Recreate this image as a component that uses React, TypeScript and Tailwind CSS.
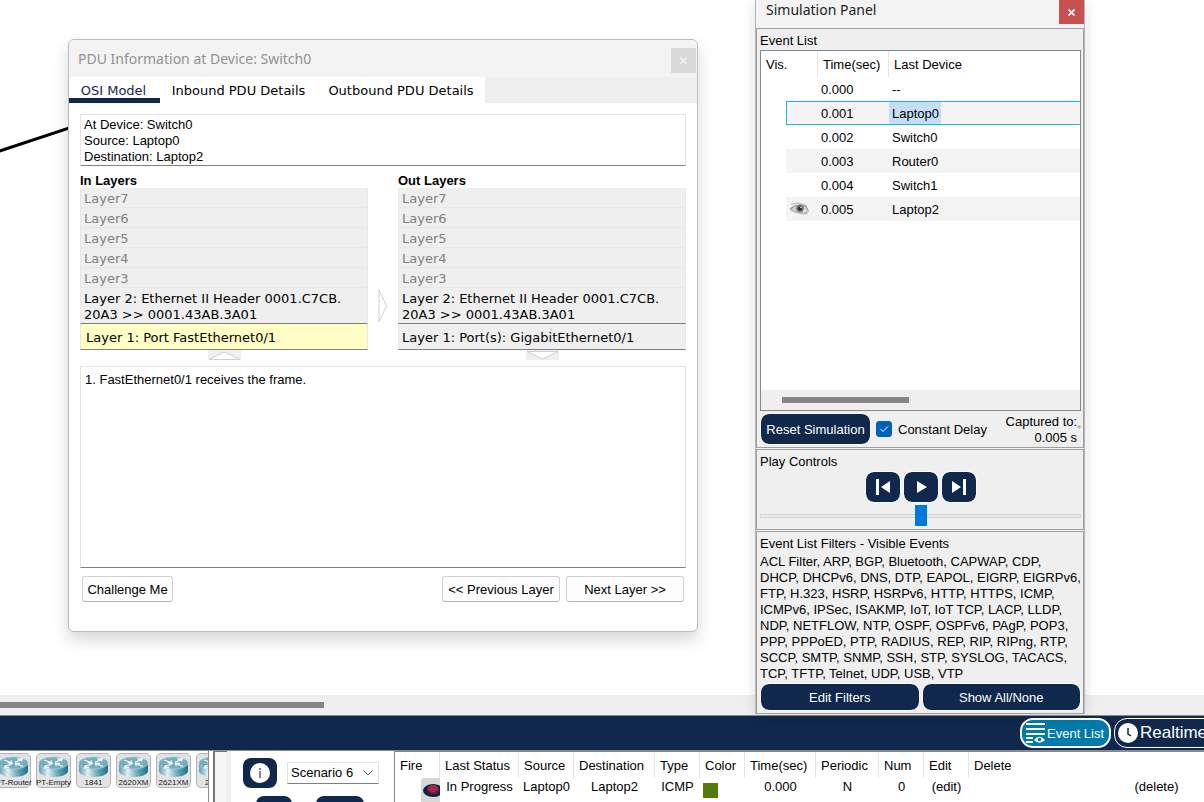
import React from 'react';

type LayerColumn = {
  title: string;
  layer1: string;
  active?: boolean;
};

const upperLayers = ['Layer7', 'Layer6', 'Layer5', 'Layer4', 'Layer3'];

const columns: LayerColumn[] = [
  { title: 'In Layers', layer1: 'Layer 1: Port FastEthernet0/1', active: true },
  { title: 'Out Layers', layer1: 'Layer 1: Port(s): GigabitEthernet0/1' },
];

const events = [
  { time: '0.000', device: '--' },
  { time: '0.001', device: 'Laptop0', selected: true },
  { time: '0.002', device: 'Switch0' },
  { time: '0.003', device: 'Router0' },
  { time: '0.004', device: 'Switch1' },
  { time: '0.005', device: 'Laptop2', visible: true },
];

const filterLines = [
  'ACL Filter, ARP, BGP, Bluetooth, CAPWAP, CDP,',
  'DHCP, DHCPv6, DNS, DTP, EAPOL, EIGRP, EIGRPv6,',
  'FTP, H.323, HSRP, HSRPv6, HTTP, HTTPS, ICMP,',
  'ICMPv6, IPSec, ISAKMP, IoT, IoT TCP, LACP, LLDP,',
  'NDP, NETFLOW, NTP, OSPF, OSPFv6, PAgP, POP3,',
  'PPP, PPPoED, PTP, RADIUS, REP, RIP, RIPng, RTP,',
  'SCCP, SMTP, SNMP, SSH, STP, SYSLOG, TACACS,',
  'TCP, TFTP, Telnet, UDP, USB, VTP',
];

const devices = ['PT-Router', 'PT-Empty', '1841', '2620XM', '2621XM', '2811'];

function LayerList({ column }: { column: LayerColumn }) {
  return (
    <section className="min-w-0 flex-1">
      <h2 className="h-[15px] text-[13px] leading-[15px] font-bold">{column.title}</h2>
      <div className="flex flex-col font-['DejaVu_Sans',sans-serif] text-[13px]">
        {upperLayers.map((name) => (
          <button
            key={name}
            type="button"
            disabled
            className="h-5 border border-t-0 border-[#e8e8e8] bg-[#efefef] px-[3px] pt-[2px] text-left leading-[17px] text-[#808080]"
          >
            {name}
          </button>
        ))}
        <button
          type="button"
          className="h-9 border-x border-b border-x-[#e8e8e8] border-b-[#808080] bg-[#efefef] px-[3px] pt-[3px] text-left leading-4"
        >
          Layer 2: Ethernet II Header 0001.C7CB.
          <br />
          20A3 &gt;&gt; 0001.43AB.3A01
        </button>
        <button
          type="button"
          className={
            column.active
              ? 'h-[26px] border-x border-b border-x-[#e8e8e8] border-b-[#808080] bg-[#ffffc5] px-[5px] pt-[2px] text-left'
              : 'h-[26px] border-x border-b border-x-[#e8e8e8] border-b-[#808080] bg-[#efefef] px-[3px] pt-[2px] text-left'
          }
        >
          {column.layer1}
        </button>
      </div>
      <svg className="mx-auto block h-[10px] w-[33px]" viewBox="0 0 33 10">
        <rect width="33" height="10" fill="#efefef" />
        <path
          d={column.active ? 'M1 9.500L16.500 2L32 9.500Z' : 'M1 1.500L16.500 9L32 1.500Z'}
          fill="#fff"
          stroke="#cfcfcf"
        />
      </svg>
    </section>
  );
}

function PduWindow() {
  return (
    <div
      role="dialog"
      aria-label="PDU Information"
      className="absolute top-[39px] left-[68px] flex h-[593px] w-[630px] flex-col overflow-hidden rounded-md border border-[#bdbdbd] bg-white shadow-[0_8px_16px_rgba(0,0,0,0.16)]"
    >
      <header className="flex h-[37px] shrink-0 items-center justify-between bg-[#f3f3f3] pr-px pl-[9px]">
        <h1 className="font-['Noto_Sans',sans-serif] text-sm text-[#929292]">PDU Information at Device: Switch0</h1>
        <button
          type="button"
          aria-label="Close"
          className="mt-1 flex size-[25px] items-center justify-center bg-[#dadada] text-[#f4f4f4]"
        >
          <svg className="size-[7px]" viewBox="0 0 7 7">
            <path d="M.5 .5L6.500 6.500M6.500 .5L.5 6.500" stroke="currentColor" strokeWidth="1.500" />
          </svg>
        </button>
      </header>
      <nav className="flex h-[26px] shrink-0 bg-[#efefef] font-['DejaVu_Sans',sans-serif] text-[13px]">
        <button type="button" className="w-[91px] border-b-5 border-[#0f284b] bg-white pt-1 pr-[2px] text-[#0f284b]">
          OSI Model
        </button>
        <button type="button" className="w-[157px] border-b-5 border-white bg-white pt-1">
          Inbound PDU Details
        </button>
        <button type="button" className="w-[168px] border-b-5 border-white bg-white pt-1">
          Outbound PDU Details
        </button>
      </nav>
      <div className="flex flex-1 flex-col px-[11px] pt-[11px]">
        <textarea
          readOnly
          aria-label="PDU summary"
          className="h-[52px] shrink-0 resize-none overflow-hidden border border-[#e3e3e3] border-b-[#808080] px-[3px] pt-[2px] leading-4 outline-none"
          value={'At Device: Switch0\nSource: Laptop0\nDestination: Laptop2'}
        />
        <div className="mt-[7px] flex">
          <LayerList column={columns[0]} />
          <div className="flex w-[30px] shrink-0 justify-center pt-[116px]">
            <svg className="h-[34px] w-[10px]" viewBox="0 0 10 34">
              <path d="M1 1L8.500 17L1 33Z" fill="#fff" stroke="#cfcfcf" />
            </svg>
          </div>
          <LayerList column={columns[1]} />
        </div>
        <textarea
          readOnly
          aria-label="Layer description"
          className="mt-[6px] h-[202px] shrink-0 resize-none border border-[#e3e3e3] border-b-[#808080] px-1 pt-[5px] leading-4 outline-none"
          value="1. FastEthernet0/1 receives the frame."
        />
        <div className="mt-2 flex h-[26px] gap-[6px] px-[2px]">
          <button type="button" className="mr-auto w-[91px] rounded-[3px] border border-[#d0d0d0] border-b-[#b5b5b5] bg-[#fdfdfd] pt-[2px]">
            Challenge Me
          </button>
          <button type="button" className="w-[118px] rounded-[3px] border border-[#d0d0d0] border-b-[#b5b5b5] bg-[#fdfdfd] pt-[2px]">
            &lt;&lt; Previous Layer
          </button>
          <button type="button" className="w-[118px] rounded-[3px] border border-[#d0d0d0] border-b-[#b5b5b5] bg-[#fdfdfd] pt-[2px]">
            Next Layer &gt;&gt;
          </button>
        </div>
      </div>
    </div>
  );
}

function EyeIcon() {
  return (
    <svg className="ml-[3px] h-[14px] w-5" viewBox="0 0 20 14">
      <path d="M2 2.500Q9-.5 18 4" stroke="#c4c4c4" strokeWidth="1.500" fill="none" />
      <path d="M0 7.500Q5 2 11 2.500T20 9Q19 12 17 13Q12 12.500 8 11Q4 10 0 7.500Z" fill="#cdcdcd" />
      <path d="M1 7Q6 2.500 12 3T19 8.500" stroke="#8a8a8a" fill="none" />
      <path d="M2 8Q8 12 18 11" stroke="#aaa" fill="none" />
      <path d="M13 6L18 9L14 10Z" fill="#f2f2f2" />
      <circle cx="11" cy="6.500" r="3.800" fill="#777" />
      <circle cx="11" cy="6.500" r="2" fill="#222" />
      <circle cx="12" cy="5.500" r=".8" fill="#eee" />
    </svg>
  );
}

function EventRow({ event, shaded }: { event: (typeof events)[number]; shaded: boolean }) {
  const tone = shaded ? 'bg-[#f4f4f4]' : '';
  const edge = event.selected ? 'border-y border-[#1cb3dc]' : '';
  return (
    <tr className="h-6">
      <td />
      <td className={`${tone} ${edge} ${event.selected ? 'border-l' : ''} p-0`}>{event.visible && <EyeIcon />}</td>
      <td className={`${tone} ${edge} p-0 pt-[2px] pl-[3px]`}>{event.time}</td>
      <td className={`${tone} ${edge} p-0`}>
        <span className={event.selected ? 'block w-[52px] bg-[#c3def5] px-[3px] pt-[2px] leading-5' : 'block px-[3px] pt-[2px] leading-5'}>
          {event.device}
        </span>
      </td>
    </tr>
  );
}

function PlayButton({ label, path }: { label: string; path: string }) {
  return (
    <button type="button" aria-label={label} className="flex h-[30px] w-[34px] items-center justify-center rounded-lg bg-[#0f284b] outline outline-white/70">
      <svg className="size-5" viewBox="0 0 20 20" fill="#fff">
        <path d={path} />
      </svg>
    </button>
  );
}

function SimulationPanel() {
  return (
    <aside className="absolute top-0 left-[755px] z-10 w-[330px] border-x border-[#b4b4b4] bg-[#f3f3f3] shadow-[0_0_14px_rgba(0,0,0,0.12)]">
      <header className="flex h-7 items-start justify-between pl-[10px]">
        <h1 className="font-['Noto_Sans',sans-serif] text-sm leading-5 text-[#222]">Simulation Panel</h1>
        <button type="button" aria-label="Close panel" className="flex h-6 w-[25px] items-center justify-center bg-[#c75050] text-white">
          <svg className="size-[7px]" viewBox="0 0 7 7">
            <path d="M.5 .5L6.500 6.500M6.500 .5L.5 6.500" stroke="currentColor" strokeWidth="1.700" />
          </svg>
        </button>
      </header>
      <section className="h-[420px] border border-[#a0a0a0] bg-[#efefef] pr-[2px] pl-[3px]">
        <h2 className="h-[21px] leading-[23px]">Event List</h2>
        <div className="flex h-[361px] flex-col border border-[#828790] bg-white">
          <table className="w-full table-fixed border-separate border-spacing-0 text-left">
            <colgroup>
              <col className="w-[25px]" />
              <col className="w-[32px]" />
              <col className="w-[71px]" />
              <col />
            </colgroup>
            <thead>
              <tr className="h-[26px]">
                <th colSpan={2} className="border-r border-[#e5e5e5] p-0 pt-[2px] pl-[5px] font-normal">Vis.</th>
                <th className="border-r border-[#e5e5e5] p-0 pt-[2px] pl-[5px] font-normal">Time(sec)</th>
                <th className="p-0 pt-[2px] pl-[5px] font-normal">Last Device</th>
              </tr>
            </thead>
            <tbody>
              {events.map((event, i) => (
                <EventRow key={event.time} event={event} shaded={i % 2 === 1} />
              ))}
            </tbody>
          </table>
          <div className="mt-auto flex h-5 items-center bg-[#efefef] pl-[21px]">
            <div className="h-[6px] w-[127px] bg-[#868686]" />
          </div>
        </div>
        <div className="flex h-9 items-center pl-px">
          <button type="button" className="h-[30px] w-[109px] rounded-lg bg-[#0f284b] pt-[2px] text-white outline outline-white/70">
            Reset Simulation
          </button>
          <label className="ml-[6px] flex items-center gap-[6px]">
            <span className="relative flex size-4">
              <input type="checkbox" defaultChecked className="peer size-4 appearance-none rounded-[3px] border border-[#0060b8] checked:bg-[#0060b8]" />
              <svg className="pointer-events-none absolute inset-0 hidden size-4 peer-checked:block" viewBox="0 0 16 16">
                <path d="M4.500 8L7 10.500L12 5.500" fill="none" stroke="#fff" />
              </svg>
            </span>
            <span className="pt-[2px]">Constant Delay</span>
          </label>
          <p className="ml-auto pt-[2px] text-right leading-4">
            Captured to:
            <br />
            0.005 s
          </p>
          <span className="text-[10px] text-[#a0a0a0]">*</span>
        </div>
      </section>
      <section className="mt-px h-[81px] border border-[#a0a0a0] bg-[#efefef] pr-[2px] pl-[3px]">
        <h2 className="h-[22px] leading-[24px]">Play Controls</h2>
        <div className="flex justify-center gap-1">
          <PlayButton label="Step back" path="M3 2h3v16H3zM17 4v12L8 10z" />
          <PlayButton label="Play" path="M6 4v12L16 10z" />
          <PlayButton label="Step forward" path="M14 2h3v16h-3zM3 4v12L12 10z" />
        </div>
        <input
          type="range"
          aria-label="Playback speed"
          defaultValue={50}
          className="mt-[3px] block h-[21px] w-full appearance-none bg-transparent [&::-webkit-slider-runnable-track]:h-1 [&::-webkit-slider-runnable-track]:border [&::-webkit-slider-runnable-track]:border-[#d3d7d7] [&::-webkit-slider-runnable-track]:bg-[#e7eaea] [&::-webkit-slider-thumb]:-mt-[10px] [&::-webkit-slider-thumb]:h-[21px] [&::-webkit-slider-thumb]:w-3 [&::-webkit-slider-thumb]:appearance-none [&::-webkit-slider-thumb]:bg-[#007ad9]"
        />
      </section>
      <section className="mt-px h-[183px] border border-[#a0a0a0] bg-[#efefef] pr-[2px] pl-[3px]">
        <h2 className="h-[21px] leading-[23px]">Event List Filters - Visible Events</h2>
        <p className="h-[131px] pt-px leading-4 whitespace-nowrap">
          {filterLines.map((line) => (
            <span key={line} className="block">
              {line}
            </span>
          ))}
        </p>
        <div className="flex h-[26px] gap-1 px-px">
          <button type="button" className="flex-1 rounded-lg bg-[#0f284b] pt-[2px] text-white outline outline-white/70">Edit Filters</button>
          <button type="button" className="flex-1 rounded-lg bg-[#0f284b] pt-[2px] text-white outline outline-white/70">Show All/None</button>
        </div>
      </section>
    </aside>
  );
}

function DeviceButton({ name }: { name: string }) {
  return (
    <button type="button" className="flex h-[35px] w-[35px] shrink-0 flex-col items-center rounded-[5px] border border-[#b3b3b3] bg-[#e3e3e3] pt-[2px]">
      <svg className="h-[22px] w-[31px] shrink-0" viewBox="0 0 31 22">
        <defs>
          <linearGradient id={`body-${name}`}>
            <stop offset="0" stopColor="#5c9db3" />
            <stop offset=".3" stopColor="#e3eff2" />
            <stop offset=".65" stopColor="#69a6b8" />
            <stop offset="1" stopColor="#16758d" />
          </linearGradient>
        </defs>
        <path d="M1 7V15C1 18 7 21 15.500 21S30 18 30 15V7Z" fill={`url(#body-${name})`} />
        <ellipse cx="15.500" cy="7" rx="14.500" ry="6" fill="#76adbf" stroke="#a7cbd6" strokeWidth=".7" />
        <path
          d="M6 4L13 6.500M9.500 7H14L13 4.500M25 10.500L19 8M22 7.500H17.500L18.500 10M14 8L7 10.500M11.500 11.500H6.500L8 9M17 6L24 3.500M19.500 3H24.500L23 5.500"
          fill="none"
          stroke="#f2f8fa"
          strokeWidth="1.300"
        />
      </svg>
      <span className="text-[8px] leading-[9px] whitespace-nowrap text-[#222]">{name}</span>
    </button>
  );
}

function ScenarioPanel() {
  return (
    <div className="flex w-[163px] shrink-0 flex-col gap-2 overflow-hidden pt-[7px]">
      <div className="flex h-[30px] shrink-0 items-center gap-[10px] pl-3">
        <button type="button" aria-label="Scenario information" className="flex h-[30px] w-[34px] items-center justify-center rounded-lg bg-[#0f284b]">
          <svg className="size-5" viewBox="0 0 20 20">
            <circle cx="10" cy="10" r="10" fill="#fff" />
            <path d="M9 5h2v2H9zM9 8h2v7H9z" fill="#7788a0" />
          </svg>
        </button>
        <div className="relative flex">
          <select aria-label="Scenario" className="h-[22px] w-[92px] appearance-none border border-[#e3e3e3] border-b-[#808080] bg-white pl-[3px]">
            <option>Scenario 6</option>
          </select>
          <svg className="pointer-events-none absolute top-2 right-[6px] h-[6px] w-[10px]" viewBox="0 0 10 6">
            <path d="M.5 .5L5 5L9.500 .5" fill="none" stroke="#555" />
          </svg>
        </div>
      </div>
      <div className="flex shrink-0 gap-6 pl-[25px]">
        <button type="button" aria-label="New scenario" className="h-[30px] w-9 rounded-lg bg-[#0f284b]" />
        <button type="button" aria-label="Delete scenario" className="h-[30px] w-12 rounded-lg bg-[#0f284b]" />
      </div>
    </div>
  );
}

const pduHeaders = ['Fire', 'Last Status', 'Source', 'Destination', 'Type', 'Color', 'Time(sec)', 'Periodic', 'Num', 'Edit', 'Delete'];

function PduTable() {
  return (
    <div className="min-w-0 flex-1 overflow-hidden border-t border-l border-[#828790]">
      <table className="w-[949px] table-fixed border-separate border-spacing-0 text-center">
        <colgroup>
          <col className="w-[45px]" />
          <col className="w-[79px]" />
          <col className="w-[55px]" />
          <col className="w-[81px]" />
          <col className="w-[45px]" />
          <col className="w-[45px]" />
          <col className="w-[71px]" />
          <col className="w-[63px]" />
          <col className="w-[45px]" />
          <col className="w-[45px]" />
          <col className="w-[375px]" />
        </colgroup>
        <thead>
          <tr className="h-[26px]">
            {pduHeaders.map((name) => (
              <th key={name} className="border-r border-[#e5e5e5] p-0 pt-[2px] pl-[5px] text-left font-normal whitespace-nowrap">
                {name}
              </th>
            ))}
          </tr>
        </thead>
        <tbody>
          <tr className="h-6 align-top leading-[18px] whitespace-nowrap">
            <td className="p-0">
              <button type="button" aria-label="Fire" className="ml-auto block h-6 w-[19px] rounded-tl-[3px] bg-[#d8d8d8]">
                <svg className="h-6 w-[19px]" viewBox="0 0 19 24">
                  <ellipse cx="12" cy="12.500" rx="10" ry="6.500" fill="#0b2344" />
                  <ellipse cx="12" cy="11.500" rx="6" ry="4.500" fill="#7b1b36" />
                  <ellipse cx="12" cy="10.500" rx="5" ry="3.500" fill="#a62848" />
                </svg>
              </button>
            </td>
            <td className="p-0">In Progress</td>
            <td className="p-0">Laptop0</td>
            <td className="p-0">Laptop2</td>
            <td className="p-0">ICMP</td>
            <td className="p-0">
              <div className="mt-[5px] ml-[3px] size-[15px] bg-[#557a08]" />
            </td>
            <td className="p-0">0.000</td>
            <td className="p-0">N</td>
            <td className="p-0">0</td>
            <td className="p-0">(edit)</td>
            <td className="p-0">(delete)</td>
          </tr>
        </tbody>
      </table>
    </div>
  );
}

export default function App() {
  return (
    <div className="flex h-screen flex-col overflow-hidden bg-white font-['Liberation_Sans',Arial,sans-serif] text-[13px] text-black">
      <main className="relative flex flex-1 flex-col">
        <div className="relative flex-1">
          <svg className="h-[160px] w-[80px]" viewBox="0 0 80 160">
            <path d="M-2 151.500L80 124.500" stroke="#000" strokeWidth="3" />
          </svg>
        </div>
        <div className="flex h-[21px] items-center border-b border-[#8c8c8c] bg-[#efefef]">
          <div className="h-[6px] w-[324px] bg-[#868686]" />
        </div>
        <PduWindow />
        <SimulationPanel />
      </main>
      <div className="flex h-[34px] shrink-0 items-center justify-end gap-[3px] overflow-hidden bg-[#0f284b] text-white">
        <button type="button" className="flex h-[30px] w-[91px] items-center gap-[2px] rounded-[13px] border-2 border-white bg-[#007aa9] pl-1 whitespace-nowrap">
          <svg className="h-[21px] w-[19px] shrink-0" viewBox="0 0 19 21" fill="#fff">
            <path d="M0 0h19v2H0zM0 5h19v2H0zM0 10h19v2H0zM0 14h7v2H0zM0 18h7v2H0z" />
            <path d="M8 17Q13.500 10.500 19 17Q13.500 22.500 8 17Z" />
            <circle cx="13.500" cy="16.500" r="1.800" fill="#007aa9" />
          </svg>
          <span className="pt-px">Event List</span>
        </button>
        <button type="button" className="-mr-[14px] flex h-[30px] w-[104px] shrink-0 items-center gap-[2px] rounded-[13px] border border-white pl-[3px] text-[17px]">
          <svg className="size-5 shrink-0" viewBox="0 0 20 20">
            <circle cx="10" cy="10" r="10" fill="#fff" />
            <path d="M10 5V11L13 13" fill="none" stroke="#0f284b" strokeWidth="1.500" />
          </svg>
          Realtime
        </button>
      </div>
      <footer className="flex h-[52px] shrink-0 overflow-hidden border-t border-[#8c8c8c]">
        <div className="flex w-[209px] shrink-0 overflow-hidden border-r border-[#8c8c8c] pt-[2px]">
          <div className="-ml-1 flex gap-[5px]">
            {devices.map((name) => (
              <DeviceButton key={name} name={name} />
            ))}
          </div>
        </div>
        <div className="ml-1 w-[14px] shrink-0 border-t border-l-2 border-[#777] bg-[#f5f5f5]" />
        <div className="w-1 shrink-0 bg-[#efefef]" />
        <ScenarioPanel />
        <PduTable />
      </footer>
    </div>
  );
}
